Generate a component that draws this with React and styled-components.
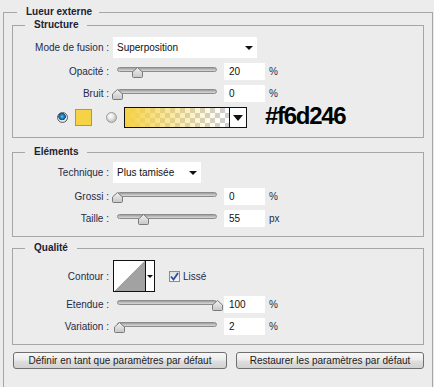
import React from "react";
import styled, { createGlobalStyle } from "styled-components";

const GlobalStyle = createGlobalStyle`
  * { box-sizing: border-box; }
  html, body {
    margin: 0;
    overflow: hidden;
    background: #ececec;
  }
  body {
    font-family: "Liberation Sans", Arial, sans-serif;
    font-size: 10px;
    color: #1e2b47;
  }
`;

const Panel = styled.fieldset`
  margin: 6px 0 0 3px;
  width: 430px;
  min-width: 0;
  padding: 0 8px 60px 8px;
  border: 1px solid #a6a6a6;
`;

const PanelLegend = styled.legend`
  margin-left: 5px;
  padding: 0 7px 0 9px;
  font-weight: bold;
  line-height: 12px;
  color: #1b2233;
`;

const Section = styled.fieldset`
  margin: ${(p) => p.$mt}px 0 0 0;
  min-width: 0;
  width: 412px;
  padding: ${(p) => p.$pt}px 0 ${(p) => p.$pb}px 0;
  border: 1px solid #a6a6a6;
`;

const SectionLegend = styled.legend`
  margin-left: 12px;
  padding: 0 9px;
  font-weight: bold;
  line-height: 12px;
  color: #1b2233;
`;

const Row = styled.div`
  display: flex;
  align-items: center;
  height: ${(p) => p.$h}px;
  margin-top: ${(p) => p.$mt || 0}px;
  padding-left: ${(p) => p.$pl || 0}px;
`;

const Label = styled.div`
  width: 96px;
  text-align: right;
  white-space: nowrap;
`;

const Select = styled.div`
  position: relative;
  display: flex;
  align-items: center;
  width: ${(p) => p.$w}px;
  height: 100%;
  margin-left: 4px;
  padding-left: 4px;
  background: #fff;
  color: #111;
  font-size: 10px;

  &::after {
    content: "";
    position: absolute;
    right: 4px;
    top: 9px;
    border-left: 4px solid transparent;
    border-right: 4px solid transparent;
    border-top: 4px solid #111;
  }
`;

const SliderBox = styled.div`
  position: relative;
  align-self: flex-start;
  margin-top: 4px;
  margin-left: 8px;
  width: 100px;
  height: 11px;
`;

const Track = styled.div`
  height: 5px;
  border-radius: 3px;
  border: 1px solid #8c8c8c;
  background: linear-gradient(#9c9c9c, #c4c4c4 60%, #d8d8d8);
`;

const Thumb = styled.svg`
  position: absolute;
  top: 0;
  width: 11px;
  height: 11px;
  margin-left: -5px;
`;

const NumberBox = styled.div`
  width: 41px;
  height: 100%;
  margin-left: 7px;
  padding-left: 5px;
  display: flex;
  align-items: center;
  background: #fff;
  color: #111;
`;

const Unit = styled.span`
  margin-left: 4px;
`;

const Radio = styled.span`
  width: 11px;
  height: 11px;
  border-radius: 50%;
  border: 1px solid ${(p) => (p.$on ? "#5a5e63" : "#9a9a9a")};
  background: ${(p) =>
    p.$on
      ? "radial-gradient(circle at 45% 40%, #6fc3ef 0, #1a7fbf 2px, #0c4f7f 3.5px, #f4f4f4 4px, #dcdcdc 5px)"
      : "radial-gradient(circle at 40% 35%, #ffffff 0, #e6e6e6 3px, #c9c9c9 5px)"};
  margin-left: ${(p) => p.$ml || 0}px;
`;

const Swatch = styled.span`
  width: 17px;
  height: 17px;
  margin-left: 7px;
  background: #f6d246;
  border: 1px solid #a99a5c;
`;

const GradientPicker = styled.div`
  display: flex;
  width: 123px;
  height: 21px;
  margin-left: 7px;
  border: 1px solid #111;
`;

const GradientStrip = styled.div`
  flex: 1;
  background:
    linear-gradient(to right, #f6d246 0%, rgba(246, 210, 70, 0.6) 35%, rgba(246, 210, 70, 0) 95%),
    repeating-conic-gradient(#cfcfcf 0 25%, #ffffff 0 50%) 0 0 / 10px 10px;
`;

const GradientArrow = styled.div`
  width: 17px;
  border-left: 1px solid #111;
  background: #fff;
  display: flex;
  align-items: center;
  justify-content: center;

  &::after {
    content: "";
    border-left: 5px solid transparent;
    border-right: 5px solid transparent;
    border-top: 6px solid #111;
  }
`;

const HexText = styled.span`
  margin-left: 18px;
  margin-top: -3px;
  font-family: "Liberation Sans", Arial, sans-serif;
  font-weight: bold;
  font-size: 24px;
  letter-spacing: -1.3px;
  color: #000;
`;

const ContourBox = styled.div`
  display: flex;
  width: 42px;
  height: 100%;
  margin-left: 4px;
  border: 1px solid #111;
  background: #fff;
`;

const ContourCurve = styled.div`
  flex: 1;
  background: linear-gradient(to top left, #a2a2a2 50%, #ffffff 50%);
`;

const ContourArrow = styled.div`
  width: 9px;
  border-left: 1px solid #111;
  display: flex;
  align-items: center;
  justify-content: center;

  &::after {
    content: "";
    border-left: 3px solid transparent;
    border-right: 3px solid transparent;
    border-top: 3px solid #111;
  }
`;

const Check = styled.span`
  display: flex;
  align-items: center;
  justify-content: center;
  width: 11px;
  height: 11px;
  margin-left: 14px;
  border: 1px solid #8a8c8f;
  background: linear-gradient(#dedede, #f6f6f6);
`;

const CheckText = styled.span`
  margin-left: 3px;
`;

const ButtonBar = styled.div`
  display: flex;
  gap: 9px;
  margin-top: 7px;
  padding-left: 1px;
`;

const Button = styled.div`
  width: ${(p) => p.$w}px;
  height: 17px;
  display: flex;
  align-items: center;
  justify-content: center;
  border: 1px solid #6f6f6f;
  border-radius: 3px;
  background: linear-gradient(#f7f7f7, #ececec 45%, #dedede 55%, #d2d2d2);
  color: #1b1b1b;
`;

function Slider({ pos }) {
  return (
    <SliderBox>
      <Track />
      <Thumb viewBox="0 0 11 11" style={{ left: `${pos}%` }}>
        <defs>
          <linearGradient id="thumbFill" x1="0" y1="0" x2="0" y2="1">
            <stop offset="0" stopColor="#f2f2f2" />
            <stop offset="1" stopColor="#c6c6c6" />
          </linearGradient>
        </defs>
        <path
          d="M5.5 0.5 L10.5 5 L10.5 9.5 Q10.5 10.5 9.5 10.5 L1.5 10.5 Q0.5 10.5 0.5 9.5 L0.5 5 Z"
          fill="url(#thumbFill)"
          stroke="#7a7a7a"
          strokeWidth="1"
          strokeLinejoin="round"
        />
      </Thumb>
    </SliderBox>
  );
}

function SliderRow({ label, value, unit, pos, mt }) {
  return (
    <Row $h={17} $mt={mt}>
      <Label>{label}</Label>
      <Slider pos={pos} />
      <NumberBox>{value}</NumberBox>
      <Unit>{unit}</Unit>
    </Row>
  );
}

export default function App() {
  return (
    <>
      <GlobalStyle />
      <Panel>
        <PanelLegend>Lueur externe</PanelLegend>

        <Section $mt={1} $pt={6} $pb={9}>
          <SectionLegend>Structure</SectionLegend>
          <Row $h={21}>
            <Label>Mode de fusion :</Label>
            <Select $w={144}>Superposition</Select>
          </Row>
          <SliderRow label="Opacité :" value="20" unit="%" pos={20} mt={5} />
          <SliderRow label="Bruit :" value="0" unit="%" pos={0} mt={5} />
          <Row $h={21} $mt={5} $pl={44}>
            <Radio $on />
            <Swatch />
            <Radio $ml={14} />
            <GradientPicker>
              <GradientStrip />
              <GradientArrow />
            </GradientPicker>
            <HexText>#f6d246</HexText>
          </Row>
        </Section>

        <Section $mt={8} $pt={4} $pb={9}>
          <SectionLegend>Eléments</SectionLegend>
          <Row $h={21}>
            <Label>Technique :</Label>
            <Select $w={88}>Plus tamisée</Select>
          </Row>
          <SliderRow label="Grossi :" value="0" unit="%" pos={0} mt={5} />
          <SliderRow label="Taille :" value="55" unit="px" pos={26} mt={5} />
        </Section>

        <Section $mt={5} $pt={6} $pb={9}>
          <SectionLegend>Qualité</SectionLegend>
          <Row $h={32}>
            <Label>Contour :</Label>
            <ContourBox>
              <ContourCurve />
              <ContourArrow />
            </ContourBox>
            <Check>
              <svg width="9" height="9" viewBox="0 0 9 9">
                <path d="M1 4.5 L3.5 7.5 L8 1" fill="none" stroke="#2a4fa8" strokeWidth="1.8" />
              </svg>
            </Check>
            <CheckText>Lissé</CheckText>
          </Row>
          <SliderRow label="Etendue :" value="100" unit="%" pos={100} mt={4} />
          <SliderRow label="Variation :" value="2" unit="%" pos={2} mt={5} />
        </Section>

        <ButtonBar>
          <Button $w={214}>Définir en tant que paramètres par défaut</Button>
          <Button $w={188}>Restaurer les paramètres par défaut</Button>
        </ButtonBar>
      </Panel>
    </>
  );
}
